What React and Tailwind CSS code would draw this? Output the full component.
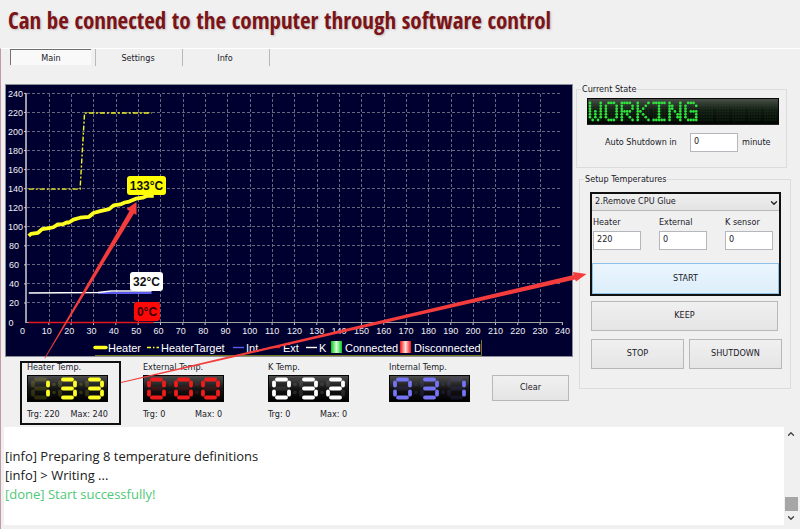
import React, { useState } from 'react';
import { ChevronDown, ChevronUp } from 'lucide-react';

const TABS = ['Main', 'Settings', 'Info'];

const PRESETS = ['1.Preheat Board', '2.Remove CPU Glue', '3.Remove CPU'];

const LOG = [
    { text: '[info] Preparing 8 temperature definitions', done: false },
    { text: '[info] > Writing ...', done: false },
    { text: '[done] Start successfully!', done: true },
];

// 5x7 dot patterns for the status display
const DOTS = {
    W: ['10001', '10001', '10001', '10101', '10101', '10101', '01010'],
    O: ['01110', '10001', '10001', '10001', '10001', '10001', '01110'],
    R: ['11110', '10001', '10001', '11110', '10100', '10010', '10001'],
    K: ['10001', '10010', '10100', '11000', '10100', '10010', '10001'],
    I: ['11111', '00100', '00100', '00100', '00100', '00100', '11111'],
    N: ['10001', '11001', '11001', '10101', '10011', '10011', '10001'],
    G: ['01110', '10001', '10000', '10111', '10001', '10001', '01111'],
    ' ': ['00000', '00000', '00000', '00000', '00000', '00000', '00000'],
};

function MatrixDisplay({ value }) {
    const chars = value.padEnd(12, ' ').split('');
    return (
        <svg viewBox="0 0 193 27" className="block w-full" role="img" aria-label={value}>
            <defs>
                <linearGradient id="matrixBg" x1="0" y1="0" x2="0" y2="1">
                    <stop offset="0" stopColor="#4a4f4a" />
                    <stop offset="0.45" stopColor="#141a14" />
                    <stop offset="1" stopColor="#020502" />
                </linearGradient>
            </defs>
            <rect width="193" height="27" fill="#050805" />
            <rect x="1" y="1" width="191" height="25" fill="url(#matrixBg)" />
            {chars.map((c, i) =>
                DOTS[c].map((row, y) =>
                    row.split('').map((on, x) => (
                        <circle
                            key={`${i}-${y}-${x}`}
                            cx={3 + i * 16 + x * 2.7}
                            cy={5 + y * 2.85}
                            r={on === '1' ? 1.4 : 1}
                            fill={on === '1' ? '#2fe43c' : '#1b5a20'}
                            opacity={on === '1' ? 1 : 0.3}
                        />
                    ))
                )
            )}
        </svg>
    );
}

// Segment order: top, top right, bottom right, bottom, bottom left, top left, middle
const SEGMENTS = [
    [5, 2, 14, 2],
    [17, 4.8, 17, 8],
    [17, 14, 17, 17.2],
    [5, 20, 14, 20],
    [2, 14, 2, 17.2],
    [2, 4.8, 2, 8],
    [5, 11, 14, 11],
];
const LIT = { 0: '1111110', 1: '0110000', 2: '1101101', 3: '1111001' };

function SegmentDisplay({ value, color, ghost }) {
    return (
        <svg viewBox="0 0 81 27" className="block w-[81px]" role="img" aria-label={value}>
            <defs>
                <linearGradient id="segmentBg" x1="0" y1="0" x2="0" y2="1">
                    <stop offset="0" stopColor="#4c4c4c" />
                    <stop offset="0.5" stopColor="#151515" />
                    <stop offset="1" stopColor="#000000" />
                </linearGradient>
            </defs>
            <rect width="81" height="27" fill="#050505" />
            <rect x="1" y="1" width="79" height="25" fill="url(#segmentBg)" />
            {value.split('').map((d, i) => (
                <g key={i} transform={`translate(${4 + i * 27} 2.5)`} strokeLinecap="round" strokeWidth="3.8">
                    {SEGMENTS.map(([x1, y1, x2, y2], s) => (
                        <line
                            key={s}
                            x1={x1}
                            y1={y1}
                            x2={x2}
                            y2={y2}
                            stroke={color}
                            opacity={LIT[d][s] === '1' ? 1 : ghost}
                        />
                    ))}
                    {i < 2 && (
                        <g fill={color} opacity={ghost}>
                            <circle cx="23" cy="7" r="1.8" />
                            <circle cx="23" cy="15" r="1.8" />
                        </g>
                    )}
                </g>
            ))}
        </svg>
    );
}

function Readout({ label, value, color, ghost, target, max }) {
    return (
        <div className="flex flex-col gap-[2px] w-[81px] leading-3 whitespace-nowrap">
            <div>{label}</div>
            <SegmentDisplay value={value} color={color} ghost={ghost} />
            {target !== undefined && (
                <div className="flex pt-1">
                    <span className="w-[52px]">Trg: {target}</span>
                    <span>Max: {max}</span>
                </div>
            )}
        </div>
    );
}

// Chart coordinates
const px = (v) => 21.5 + v * 2.233;
const py = (v) => 238.5 - v * 0.9525;
const toPoints = (data) => data.map(([x, y]) => `${px(x)},${py(y)}`).join(' ');

const HEATER = [
    [1, 91], [2, 93], [5, 94], [7, 98], [10, 99], [12, 100], [14, 103], [16, 103], [18, 105], [19, 105], [21, 108], [24, 110],
    [28, 111], [30, 115], [33, 117], [37, 119], [39, 123], [42, 124], [44, 126], [46, 127], [49, 130], [52, 131], [54, 133], [57, 133],
];
const TARGET = [[1, 140], [24, 140], [26, 220], [56, 220]];

function Callout({ x, y, w, h, bg, color, children }) {
    return (
        <g>
            <rect x={x} y={y} width={w} height={h} rx="3" fill={bg} />
            <text x={x + w / 2} y={y + 14} textAnchor="middle" fontSize="12" fontWeight="bold" fill={color}>
                {children}
            </text>
        </g>
    );
}

function TemperatureChart() {
    const xs = Array.from({ length: 24 }, (_, i) => (i + 1) * 10);
    const ys = Array.from({ length: 12 }, (_, i) => (i + 1) * 20);
    return (
        <svg viewBox="0 0 568 273" className="block w-full font-['Liberation_Sans',sans-serif]">
            <defs>
                <linearGradient id="green" x1="0" x2="1">
                    <stop offset="0" stopColor="#00c818" />
                    <stop offset="0.5" stopColor="#d8ffd8" />
                    <stop offset="1" stopColor="#00c818" />
                </linearGradient>
                <linearGradient id="red" x1="0" x2="1">
                    <stop offset="0" stopColor="#ee1010" />
                    <stop offset="0.5" stopColor="#ffe0e0" />
                    <stop offset="1" stopColor="#ee1010" />
                </linearGradient>
            </defs>
            <rect width="568" height="273" fill="#8c8c96" />
            <rect x="1" y="1" width="566" height="271" fill="#000030" />

            <g stroke="#66667c" strokeDasharray="3 2">
                {xs.slice(0, 23).map((v) => (
                    <line key={v} x1={Math.round(px(v)) + 0.5} x2={Math.round(px(v)) + 0.5} y1="10" y2="238" />
                ))}
                {ys.map((v) => (
                    <line key={v} x1="22" x2="557" y1={Math.round(py(v)) - 0.5} y2={Math.round(py(v)) - 0.5} />
                ))}
            </g>
            <line x1="21" x2="21" y1="9" y2="239" stroke="#9a9aa8" strokeWidth="2" />
            <line x1="20" x2="558" y1="238.5" y2="238.5" stroke="#a0a0a0" />
            <g stroke="#c8c8d0">
                {xs.map((v) => (
                    <line key={v} x1={px(v)} x2={px(v)} y1="239" y2="241" />
                ))}
                {ys.map((v) => (
                    <line key={v} x1="19" x2="21" y1={py(v) - 0.5} y2={py(v) - 0.5} />
                ))}
            </g>

            <g fill="#f0f0f4" fontSize="9">
                {[0, ...ys].map((v) => (
                    <text key={v} x={v === 0 ? 6 : v < 100 ? 14 : 18} y={py(v) + 3} textAnchor={v === 0 ? 'middle' : 'end'}>
                        {v}
                    </text>
                ))}
                {[0, ...xs].map((v) => (
                    <text key={v} x={px(v) - (v === 0 ? 4 : v < 100 ? 2 : 0)} y="250" textAnchor="middle">
                        {v}
                    </text>
                ))}
            </g>

            <polyline points={toPoints(TARGET)} fill="none" stroke="#f4f420" strokeWidth="1.4" strokeDasharray="5 2 2 2" />
            <polyline points={toPoints([[1, 0], [57, 0]])} fill="none" stroke="#e01818" strokeWidth="1.6" />
            <polyline points={toPoints([[32, 31], [56, 31]])} fill="none" stroke="#5a5af0" strokeWidth="2" />
            <polyline points={toPoints([[1, 31], [32, 31.5], [38, 33], [56, 33]])} fill="none" stroke="#ffffff" strokeWidth="1.4" />
            <polyline points={toPoints(HEATER)} fill="none" stroke="#ffff20" strokeWidth="3.8" strokeLinejoin="round" />

            <Callout x={122} y={92} w={39} h={19} bg="#ffff00" color="#101010">133°C</Callout>
            <Callout x={125} y={188} w={33} h={19} bg="#ffffff" color="#101010">32°C</Callout>
            <Callout x={129} y={218} w={26} h={19} bg="#ff0808" color="#300000">0°C</Callout>

            {/* Legend */}
            <path d="M90 271.5H476.5V256" fill="none" stroke="#76761c" />
            <g fill="#ffffff" fontSize="11">
                <line x1="90" x2="101" y1="263.5" y2="263.5" stroke="#ffff20" strokeWidth="3.4" strokeLinecap="round" />
                <text x="103" y="268">Heater</text>
                <line x1="142" x2="154" y1="263.5" y2="263.5" stroke="#ffff20" strokeDasharray="4 2 1.5 2" strokeWidth="1.3" />
                <text x="156" y="268">HeaterTarget</text>
                <line x1="228" x2="239" y1="263.5" y2="263.5" stroke="#5a5af0" strokeWidth="1.4" />
                <text x="241" y="268">Int</text>
                <line x1="264" x2="275" y1="263.5" y2="263.5" stroke="#e01818" strokeWidth="1.4" />
                <text x="278" y="268">Ext</text>
                <line x1="301" x2="312" y1="263.5" y2="263.5" stroke="#ffffff" strokeWidth="1.4" />
                <text x="314" y="268">K</text>
                <rect x="326" y="257" width="11" height="12" fill="url(#green)" />
                <text x="340" y="268">Connected</text>
                <rect x="395" y="257" width="11" height="12" fill="url(#red)" />
                <text x="409" y="268">Disconnected</text>
            </g>
        </svg>
    );
}

function PushButton({ className = '', children }) {
    return (
        <button
            type="button"
            className={`border border-[#b8b8b8] bg-gradient-to-b from-[#f0f0f0] to-[#e5e5e5] text-center ${className}`}
        >
            {children}
        </button>
    );
}

function TempField({ id, label, value }) {
    return (
        <div className="flex flex-col gap-[3px] w-12">
            <label htmlFor={id} className="leading-3 whitespace-nowrap">{label}</label>
            <input
                id={id}
                defaultValue={value}
                className="w-full h-[19px] px-[3px] pb-[3px] bg-white border border-[#b4b8bc] outline-none"
            />
        </div>
    );
}

export default function App() {
    const [tab, setTab] = useState('Main');

    return (
        <div className="relative min-h-screen flex flex-col bg-[#f0f0f0] text-[#202028] text-[9px] font-['DejaVu_Sans_Condensed','DejaVu_Sans',sans-serif]">
            <header className="h-12 px-2 flex items-center whitespace-nowrap">
                <h1 className="text-[23px] leading-8 pb-2 font-semibold text-[#7a1418] font-['Open_Sans_Condensed','Roboto_Condensed',sans-serif] [text-shadow:1px_1px_2px_#a0909080]">
                    Can be connected to the computer through software control
                </h1>
            </header>

            <div className="flex-1 flex flex-col border-t border-t-white border-l border-l-[#c09aa6]">
                <nav className="flex h-[17px] pl-2">
                    {TABS.map((t) => (
                        <div key={t} className="w-[87px] pr-1 pl-px border-r border-[#b8b8b8]">
                            <button
                                type="button"
                                onClick={() => setTab(t)}
                                className={`w-full h-4 leading-[14px] border-t border-l ${tab === t ? 'border-[#707070] bg-[#f9f9f9]' : 'border-transparent'}`}
                            >
                                {t}
                            </button>
                        </div>
                    ))}
                </nav>

                <main className="flex gap-[3px] pt-[18px] pl-1 pr-[10px]">
                    <section className="flex-1 min-w-0">
                        <TemperatureChart />
                        <div className="flex items-start pl-[22px] pt-1 pb-[7px]">
                            <div className="relative">
                                <Readout label="Heater Temp." value="133" color="#ffff28" ghost={0.15} target={220} max={240} />
                                <div className="absolute top-0 -left-[7px] w-[101px] h-16 border-2 border-[#101010] pointer-events-none" />
                            </div>
                            <div className="ml-[35px]">
                                <Readout label="External Temp." value="000" color="#f01c1c" ghost={0.15} target={0} max={0} />
                            </div>
                            <div className="ml-11">
                                <Readout label="K Temp." value="032" color="#ffffff" ghost={0.1} target={0} max={0} />
                            </div>
                            <div className="ml-10">
                                <Readout label="Internal Temp." value="031" color="#7474f4" ghost={0.12} />
                            </div>
                            <PushButton className="ml-[22px] mt-[14px] w-[77px] h-[26px]">Clear</PushButton>
                        </div>
                    </section>

                    <aside className="w-[214px] shrink-0">
                        <fieldset className="w-[211px] h-[84px] pl-[10px] pr-[7px] border border-[#dcdcdc]">
                            <legend className="-ml-[6px] px-px leading-[10px]">Current State</legend>
                            <div className="mt-1">
                                <MatrixDisplay value="WORKING" />
                            </div>
                            <div className="flex items-center pt-2 pl-[18px]">
                                <label htmlFor="shutdown" className="w-[85px]">Auto Shutdown in</label>
                                <input
                                    id="shutdown"
                                    defaultValue="0"
                                    className="w-12 h-[19px] px-[3px] pb-[3px] bg-white border border-[#b4b8bc] outline-none"
                                />
                                <span className="pl-1">minute</span>
                            </div>
                        </fieldset>

                        <fieldset className="ml-[3px] mt-[6px] w-[211px] h-[215px] pl-[10px] pr-2 border border-[#dcdcdc]">
                            <legend className="-ml-[6px] px-px leading-[10px]">Setup Temperatures</legend>
                            <div className="mt-2 w-[191px] border-2 border-[#101010]">
                                <div className="relative">
                                    <select
                                        aria-label="Preset"
                                        defaultValue={PRESETS[1]}
                                        className="block w-full h-[17px] pl-[3px] appearance-none border-b border-[#b8b8b8] bg-gradient-to-b from-[#f0f0f0] to-[#e3e3e3] outline-none"
                                    >
                                        {PRESETS.map((p) => (
                                            <option key={p}>{p}</option>
                                        ))}
                                    </select>
                                    <ChevronDown size={10} strokeWidth={3} className="absolute right-0 top-1 pointer-events-none" />
                                </div>
                                <div className="flex gap-[18px] pt-[5px] pl-px">
                                    <TempField id="heater" label="Heater" value="220" />
                                    <TempField id="external" label="External" value="0" />
                                    <TempField id="ksensor" label="K sensor" value="0" />
                                </div>
                                <button type="button" className="mt-[13px] block w-full h-[31px] border border-[#8fc0e8] bg-gradient-to-b from-[#ebf5fd] to-[#dceefb]">
                                    START
                                </button>
                            </div>
                            <div className="flex flex-col gap-2 pt-[5px] pl-px">
                                <PushButton className="w-[187px] h-[30px]">KEEP</PushButton>
                                <div className="flex gap-[5px]">
                                    <PushButton className="w-[93px] h-[30px]">STOP</PushButton>
                                    <PushButton className="w-[93px] h-[30px]">SHUTDOWN</PushButton>
                                </div>
                            </div>
                        </fieldset>
                    </aside>
                </main>

                <div className="flex-1 flex ml-[3px] mr-[2px] mb-1 bg-white">
                    <div role="log" className="flex-1 pt-5 pl-px text-[13px] leading-[19px] text-[#202020] font-['Open_Sans','Noto_Sans',sans-serif]">
                        {LOG.map((line) => (
                            <p key={line.text} className={line.done ? 'text-[#4fc878]' : ''}>{line.text}</p>
                        ))}
                    </div>
                    <div className="w-[14px] flex flex-col items-center bg-[#f0f0f0] text-[#404040]">
                        <ChevronUp size={10} strokeWidth={3} className="mt-[2px]" />
                        <div className="flex-1" />
                        <div className="w-[13px] h-[14px] bg-[#a6a6a6]" />
                        <ChevronDown size={10} strokeWidth={3} className="mt-[2px] mb-[2px]" />
                    </div>
                </div>
            </div>

            {/* Callout arrows */}
            <svg viewBox="0 0 800 529" className="absolute left-0 top-0 w-full pointer-events-none" fill="#f53c3c">
                <path d="M44.500 358 L129.500 211 L126.500 209 L136.500 202 L136.500 215 L134 213.500 L45 358.500Z" />
                <path d="M121 382 L573.500 275 L573 272 L586.500 274 L576 281.500 L575 279.500 L121 383Z" />
            </svg>
        </div>
    );
}
